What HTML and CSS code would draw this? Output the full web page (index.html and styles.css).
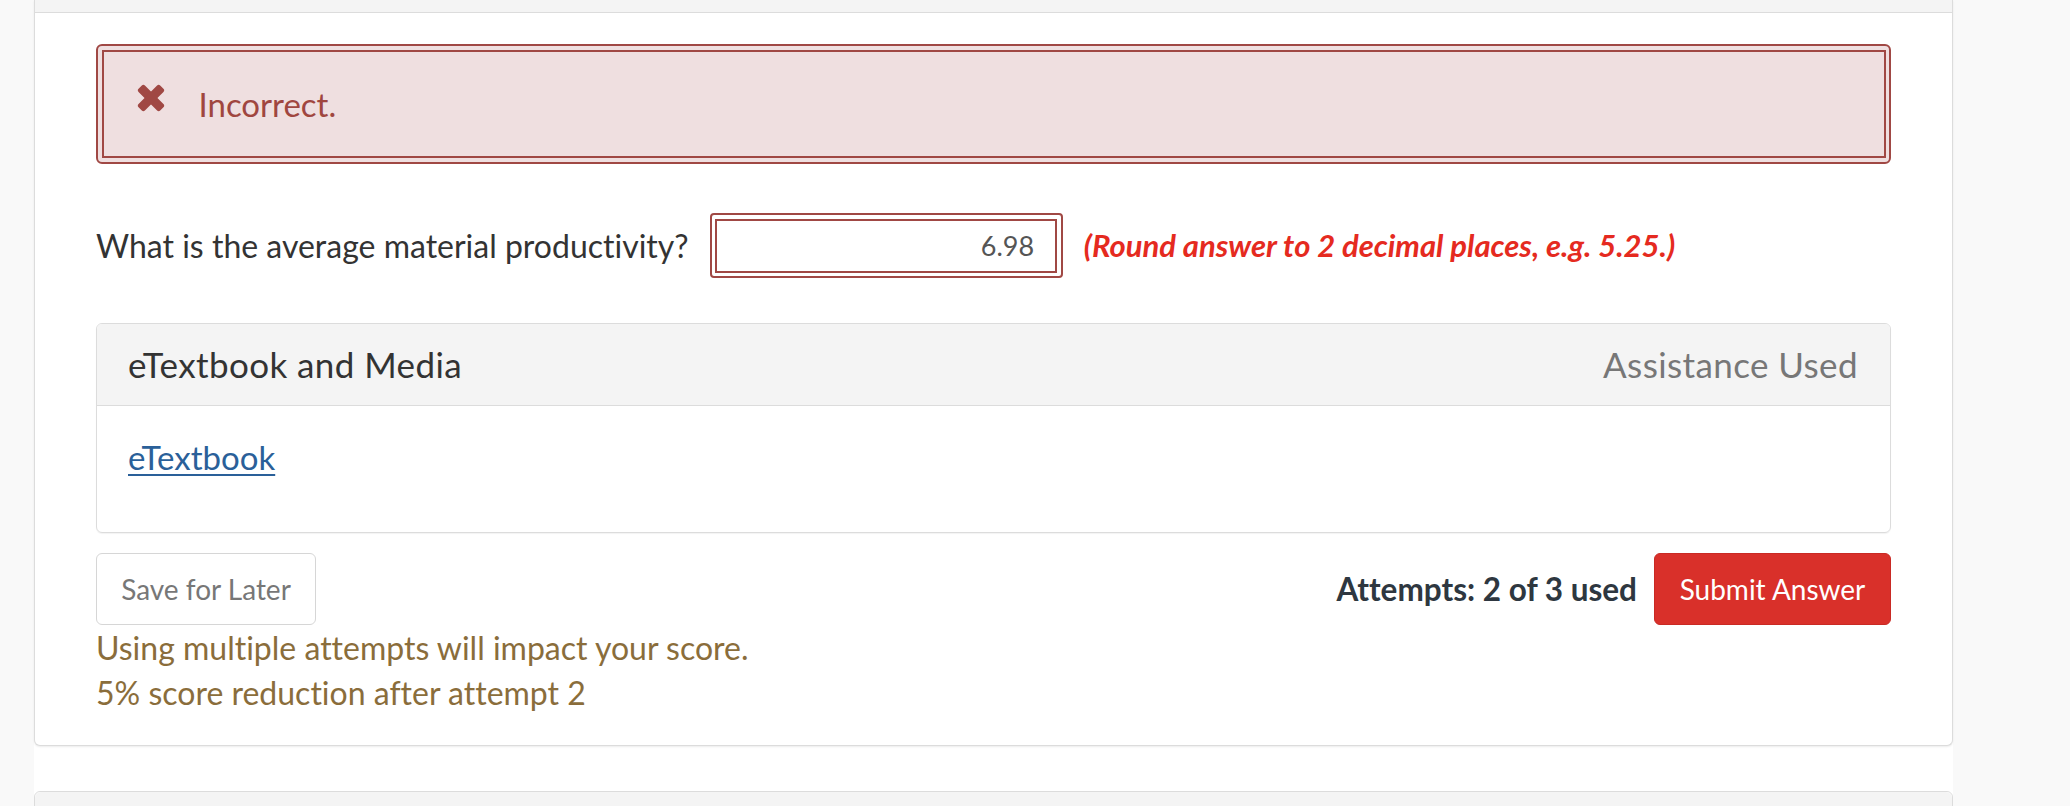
FILE: index.html
```html
<!DOCTYPE html>
<html lang="en">
<head>
<meta charset="utf-8">
<title>Question</title>
<link rel="stylesheet" href="styles.css">
</head>
<body>
<div class="page">
  <div class="card">
    <div class="card-head"></div>
    <div class="card-body">
      <div class="alert">
        <div class="alert-inner">
          <svg class="alert-icon" viewBox="0 0 28 28" width="28" height="28" aria-hidden="true">
            <rect x="-1.3" y="9.5" width="30.6" height="9" rx="2.2" transform="rotate(45 14 14)" fill="#a04844"/>
            <rect x="-1.3" y="9.5" width="30.6" height="9" rx="2.2" transform="rotate(-45 14 14)" fill="#a04844"/>
          </svg>
          <span class="alert-text">Incorrect.</span>
        </div>
      </div>

      <div class="question">
        <span class="q-text">What is the average material productivity?</span>
        <div class="answer-wrap">
          <input class="answer" type="text" value="6.98" readonly>
        </div>
        <span class="hint">(Round answer to 2 decimal places, e.g. 5.25.)</span>
      </div>

      <div class="panel">
        <div class="panel-head">
          <span class="panel-title">eTextbook and Media</span>
          <span class="panel-meta">Assistance Used</span>
        </div>
        <div class="panel-body">
          <a class="link" href="#">eTextbook</a>
        </div>
      </div>

      <div class="actions">
        <button class="btn btn-save" type="button">Save for Later</button>
        <div class="submit-group">
          <span class="attempts">Attempts: 2 of 3 used</span>
          <button class="btn btn-submit" type="button">Submit Answer</button>
        </div>
      </div>
      <div class="warning">
        <div>Using multiple attempts will impact your score.</div>
        <div>5% score reduction after attempt 2</div>
      </div>
    </div>
  </div>
  <div class="card next-card">
    <div class="next-head"></div>
  </div>
</div>
</body>
</html>
```

FILE: styles.css
```css
html, body {
  margin: 0;
  padding: 0;
  overflow: hidden;
}
body {
  background: #f9f9f9;
  font-family: "Lato", "Liberation Sans", sans-serif;
  font-variant-ligatures: none;
  color: #333;
}
.page {
  width: 1919px;
  margin-left: 34px;
  background: #fff;
  min-height: 806px;
}
.card {
  border: 1px solid #dcdcdc;
  border-top: none;
  border-radius: 0 0 6px 6px;
  box-shadow: 0 1px 2px rgba(0,0,0,0.08);
  background: #fff;
}
.card-head {
  height: 12px;
  background: #f4f4f4;
  border-bottom: 1px solid #dcdcdc;
}
.card-body {
  padding: 31px 61px 30px 61px;
}
.alert {
  border: 2px solid #a04844;
  border-radius: 6px;
  background: #efdfe0;
  padding: 4px 3.5px;
}
.alert-inner {
  border: 2px solid #a04844;
  padding: 28px 33px;
  display: flex;
  align-items: flex-start;
}
.alert-icon {
  flex: none;
  margin-top: 4px;
  margin-right: 34px;
}
.alert-text {
  font-size: 33px;
  line-height: 48px;
  color: #a0463f;
}
.question {
  margin-top: 49px;
  display: flex;
  align-items: center;
}
.q-text {
  font-size: 32px;
  line-height: 45px;
  color: #333;
}
.answer-wrap {
  width: 353px;
  height: 65px;
  box-sizing: border-box;
  margin-left: 21px;
  border: 2px solid #a04844;
  border-radius: 4px;
  padding: 3.5px;
}
.answer {
  box-sizing: border-box;
  width: 100%;
  height: 100%;
  border: 2px solid #a04844;
  margin: 0;
  padding: 0 21px 0 10px;
  text-align: right;
  font-family: "Lato", "Liberation Sans", sans-serif;
  font-size: 27px;
  color: #555;
  background: #fff;
  outline: none;
}
.hint {
  margin-left: 21px;
  font-size: 31px;
  font-weight: 700;
  font-style: italic;
  color: #e52a20;
  line-height: 45px;
}
.panel {
  margin-top: 45px;
  border: 1px solid #dcdcdc;
  border-radius: 6px;
  box-shadow: 0 1px 1px rgba(0,0,0,0.05);
  overflow: hidden;
}
.panel-head {
  background: #f4f4f4;
  border-bottom: 1px solid #dcdcdc;
  padding: 17px 32px 17px 31px;
  display: flex;
  justify-content: space-between;
  font-size: 35px;
  letter-spacing: 0.4px;
  line-height: 47px;
}
.panel-title {
  color: #333;
}
.panel-meta {
  color: #777;
}
.panel-body {
  padding: 30px 31px 54px 31px;
  font-size: 33px;
  line-height: 42px;
}
.link {
  color: #2a6099;
  text-decoration: underline;
  text-decoration-thickness: 2px;
  text-underline-offset: 4px;
}
.actions {
  margin-top: 20px;
  display: flex;
  justify-content: space-between;
  align-items: center;
}
.btn {
  height: 72px;
  border-radius: 6px;
  font-family: "Lato", "Liberation Sans", sans-serif;
  font-size: 28px;
  padding: 0;
  white-space: nowrap;
  text-align: center;
  cursor: pointer;
}
.btn-save {
  width: 220px;
  background: #fff;
  border: 1px solid #d6d6d6;
  color: #777;
}
.submit-group {
  display: flex;
  align-items: center;
}
.attempts {
  font-size: 31.5px;
  font-weight: 700;
  color: #2e3740;
  margin-right: 17px;
}
.btn-submit {
  width: 237px;
  background: #d9302a;
  border: 1px solid #c92a24;
  color: #fff;
}
.warning {
  color: #8a6d3b;
  font-size: 32px;
  line-height: 45px;
}
.next-card {
  margin-top: 45px;
  border-top: 1px solid #dcdcdc;
  border-radius: 6px 6px 0 0;
  box-shadow: none;
}
.next-head {
  height: 40px;
  background: #f4f4f4;
  border-radius: 6px 6px 0 0;
}
```
